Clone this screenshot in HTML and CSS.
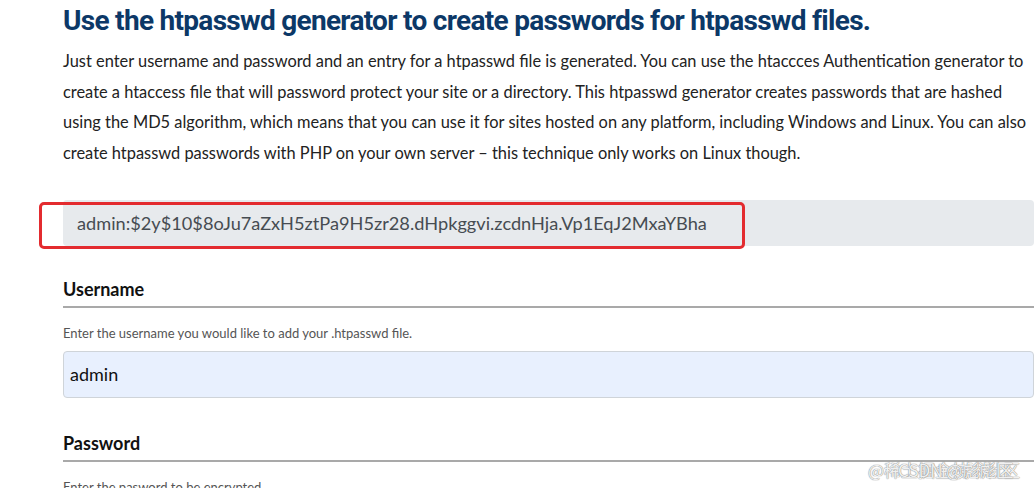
FILE: index.html
```html
<!DOCTYPE html>
<html>
<head>
<meta charset="utf-8">
<link rel="stylesheet" href="styles.css">
</head>
<body>
<div class="page">
  <h1 class="title">Use the htpasswd generator to create passwords for htpasswd files.</h1>
  <p class="intro">Just enter username and password and an entry for a htpasswd file is generated. You can use the htaccces Authentication generator to create a htaccess file that will password protect your site or a directory. This htpasswd generator creates passwords that are hashed using the MD5 algorithm, which means that you can use it for sites hosted on any platform, including Windows and Linux. You can also create htpasswd passwords with PHP on your own server – this technique only works on Linux though.</p>
  <div class="output-wrap">
    <div class="output">admin:$2y$10$8oJu7aZxH5ztPa9H5zr28.dHpkggvi.zcdnHja.Vp1EqJ2MxaYBha</div>
    <div class="highlight"></div>
  </div>
  <div class="field">
    <h3 class="label">Username</h3>
    <p class="help">Enter the username you would like to add your .htpasswd file.</p>
    <div class="input">admin</div>
  </div>
  <div class="field">
    <h3 class="label">Password</h3>
    <p class="help">Enter the pasword to be encrypted</p>
  </div>
</div>
<div class="watermark"><span class="wm1">@稀土掘金技术社区</span><span class="wm2">CSDN @彪彪区</span></div>
</body>
</html>
```
FILE: styles.css
```css
html, body {
  margin: 0;
  padding: 0;
  background: #fff;
  overflow: hidden;
}
body {
  width: 1034px;
  height: 488px;
  position: relative;
  font-family: Lato, "Liberation Sans", sans-serif;
  color: #222;
}
.page {
  padding: 0 0 0 63px;
}
.title {
  margin: 0;
  padding-top: 3px;
  font-family: Roboto, "Liberation Sans", sans-serif;
  font-weight: 700;
  font-size: 28px;
  line-height: 36px;
  letter-spacing: -0.7px;
  color: #0c3867;
  white-space: nowrap;
}
.intro {
  margin: 7px 0 0;
  width: 975px;
  font-size: 16.4px;
  line-height: 30.5px;
  color: #222;
}
.output-wrap {
  position: relative;
  margin-top: 32px;
}
.output {
  background: #e7eaed;
  border-radius: 4px;
  height: 46px;
  line-height: 46px;
  padding-left: 14px;
  font-size: 18.2px;
  color: #464c52;
  white-space: nowrap;
}
.highlight {
  position: absolute;
  left: -24px;
  top: 2px;
  width: 700px;
  height: 41px;
  border: 3px solid #e32b2f;
  border-radius: 5px;
}
.field {
  margin-top: 31px;
}
.label {
  margin: 0;
  font-size: 18px;
  font-weight: 700;
  line-height: 24px;
  color: #111;
  padding-bottom: 5px;
  border-bottom: 2px solid #a9a9a9;
}
.help {
  margin: 16px 0 0;
  font-size: 13px;
  line-height: 18px;
  color: #555;
}
.input {
  margin-top: 9px;
  height: 45px;
  line-height: 45px;
  background: #e8f0fe;
  border: 1px solid #cfd4d9;
  border-radius: 4px;
  padding-left: 6px;
  font-size: 18px;
  color: #111;
}
.field + .field {
  margin-top: 33px;
}
.watermark {
  position: absolute;
  left: 868px;
  top: 459px;
  width: 166px;
  height: 22px;
}
.watermark span {
  position: absolute;
  top: 0;
  font-family: "Noto Sans CJK SC", sans-serif;
  font-size: 17px;
  line-height: 22px;
  color: rgba(255,255,255,0.9);
  text-shadow: 0 0 1px #888, 0 0 1px #888;
  white-space: nowrap;
}
.wm1 { left: 0; }
.wm2 { left: 30px; }
```
